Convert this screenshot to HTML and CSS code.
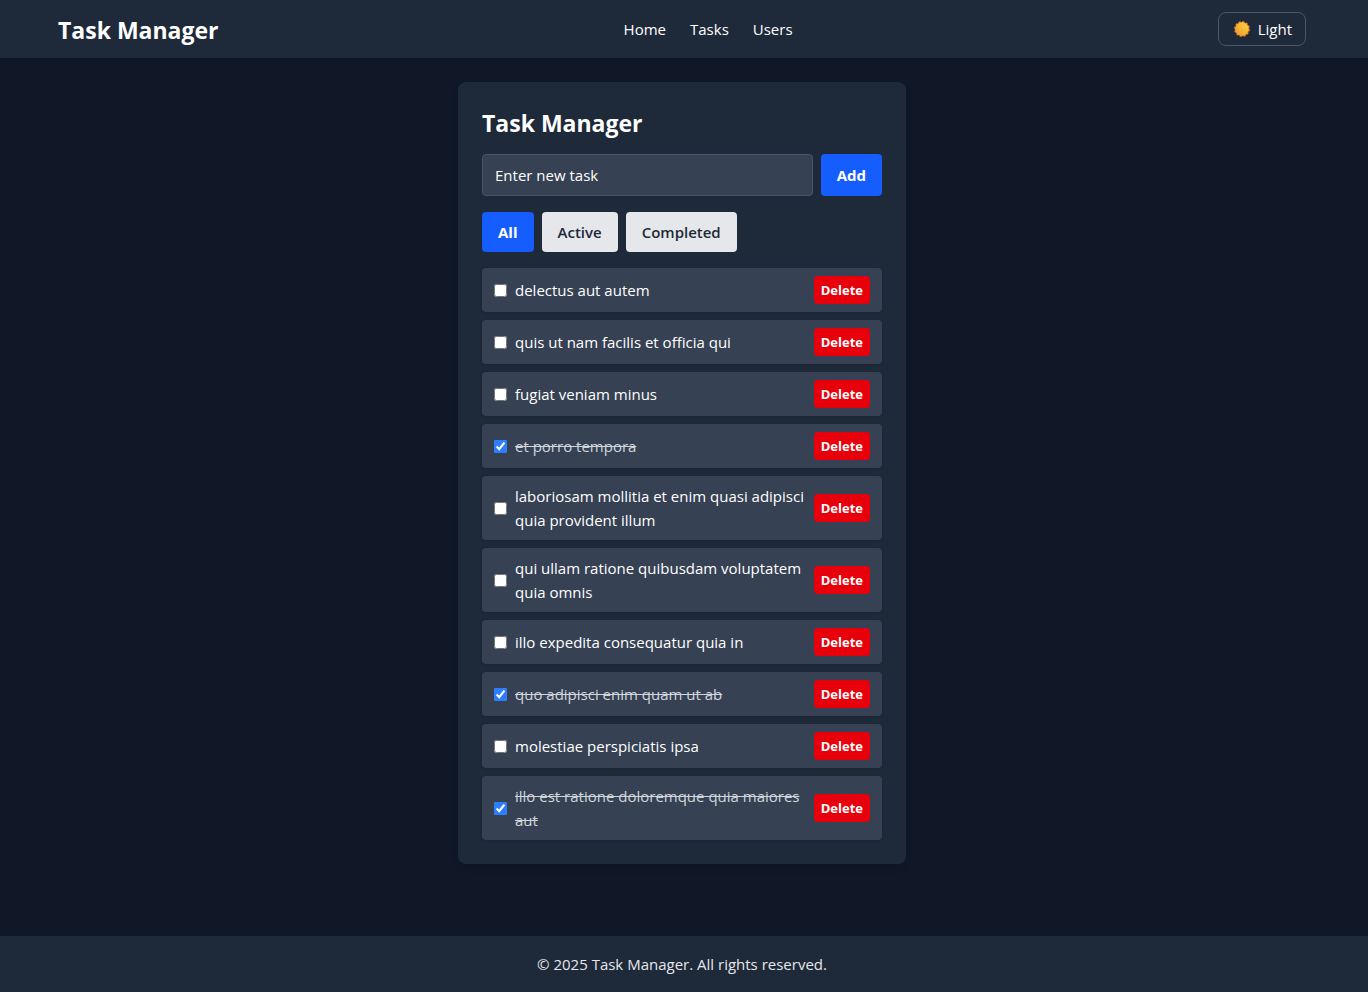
FILE: index.html
```html
<!DOCTYPE html>
<html lang="en">
<head>
<meta charset="utf-8">
<meta name="viewport" content="width=device-width, initial-scale=1">
<title>Task Manager</title>
<link rel="stylesheet" href="styles.css">
</head>
<body>
<header class="site-header">
  <div class="header-inner">
    <h1 class="title">Task Manager</h1>
    <nav class="nav" aria-label="Main">
      <a href="#home">Home</a>
      <a href="#tasks">Tasks</a>
      <a href="#users">Users</a>
    </nav>
    <button class="theme-button" type="button">
      <svg class="sun" viewBox="0 0 16 16" aria-hidden="true">
        <defs>
          <linearGradient id="sun-fill" x1="1" y1="0" x2="0" y2="1">
            <stop offset="0" stop-color="#fcd53f"/>
            <stop offset="1" stop-color="#ee9a2c"/>
          </linearGradient>
        </defs>
        <circle cx="8" cy="8" r="7.1" fill="none" stroke="#f08228" stroke-width="1.6" stroke-dasharray="2.2 1.517"/>
        <circle cx="8" cy="8" r="7.1" fill="#ef8b2c"/>
        <circle cx="8" cy="8" r="6.4" fill="url(#sun-fill)"/>
      </svg>
      <span>Light</span>
    </button>
  </div>
</header>
<main class="main">
  <section class="card">
    <h2 class="title">Task Manager</h2>
    <form class="task-form">
      <input class="task-input" type="text" placeholder="Enter new task" aria-label="Enter new task">
      <button class="button primary" type="button">Add</button>
    </form>
    <div class="filters">
      <button class="button primary" type="button">All</button>
      <button class="button secondary" type="button">Active</button>
      <button class="button secondary" type="button">Completed</button>
    </div>
    <ul class="tasks">
      <li class="task"><label class="task-label"><input class="check" type="checkbox"><span class="task-text">delectus aut autem</span></label><button class="delete" type="button">Delete</button></li>
      <li class="task"><label class="task-label"><input class="check" type="checkbox"><span class="task-text">quis ut nam facilis et officia qui</span></label><button class="delete" type="button">Delete</button></li>
      <li class="task"><label class="task-label"><input class="check" type="checkbox"><span class="task-text">fugiat veniam minus</span></label><button class="delete" type="button">Delete</button></li>
      <li class="task"><label class="task-label"><input class="check" type="checkbox" checked><span class="task-text">et porro tempora</span></label><button class="delete" type="button">Delete</button></li>
      <li class="task"><label class="task-label"><input class="check" type="checkbox"><span class="task-text">laboriosam mollitia et enim quasi adipisci quia provident illum</span></label><button class="delete" type="button">Delete</button></li>
      <li class="task"><label class="task-label"><input class="check" type="checkbox"><span class="task-text">qui ullam ratione quibusdam voluptatem quia omnis</span></label><button class="delete" type="button">Delete</button></li>
      <li class="task"><label class="task-label"><input class="check" type="checkbox"><span class="task-text">illo expedita consequatur quia in</span></label><button class="delete" type="button">Delete</button></li>
      <li class="task"><label class="task-label"><input class="check" type="checkbox" checked><span class="task-text">quo adipisci enim quam ut ab</span></label><button class="delete" type="button">Delete</button></li>
      <li class="task"><label class="task-label"><input class="check" type="checkbox"><span class="task-text">molestiae perspiciatis ipsa</span></label><button class="delete" type="button">Delete</button></li>
      <li class="task"><label class="task-label"><input class="check" type="checkbox" checked><span class="task-text">illo est ratione doloremque quia maiores aut</span></label><button class="delete" type="button">Delete</button></li>
    </ul>
  </section>
</main>
<footer class="site-footer">© 2025 Task Manager. All rights reserved.</footer>
</body>
</html>
```
FILE: styles.css
```css
*, *::before, *::after {
  box-sizing: border-box;
}

body {
  margin: 0;
  min-height: 100vh;
  display: flex;
  flex-direction: column;
  background: #101828;
  color: #fff;
  font-family: "Segoe UI", "Open Sans", "Noto Sans", sans-serif;
  font-size: 15px;
  line-height: 24px;
}

button, input {
  font: inherit;
}

button {
  cursor: pointer;
}

.title {
  margin: 0;
  padding-top: 2px;
  font-size: 23px;
  line-height: 30px;
  font-weight: 700;
}

.site-header {
  background: #1e2939;
  padding: 12px 4px 12px 0;
  box-shadow: 0 1px 3px rgb(0 0 0 / 0.1);
}

.header-inner {
  max-width: 1280px;
  margin: 0 auto;
  padding: 0 16px;
  display: flex;
  align-items: center;
  justify-content: space-between;
}

.nav {
  display: flex;
  gap: 24px;
  margin-right: 20px;
}

.nav a {
  color: inherit;
  text-decoration: none;
}

.theme-button {
  display: flex;
  align-items: center;
  gap: 8px;
  padding: 4px 13px;
  border: 1px solid #4a5565;
  border-radius: 8px;
  background: transparent;
  color: inherit;
}

.sun {
  width: 16px;
  height: 16px;
  margin-left: 2px;
}

.main {
  flex: 1;
  padding: 24px 4px 24px 0;
}

.card {
  max-width: 448px;
  margin: 0 auto;
  padding: 24px;
  border-radius: 8px;
  background: #1e2939;
  box-shadow: 0 4px 6px rgb(0 0 0 / 0.1);
}

.task-form {
  display: flex;
  gap: 8px;
  margin: 16px 0;
}

.task-input {
  flex: 1;
  min-width: 0;
  padding: 8px 12px;
  border: 1px solid #4a5565;
  border-radius: 4px;
  background: #364153;
  color: #fff;
}

.task-input::placeholder {
  color: #fff;
  opacity: 1;
}

.button {
  padding: 8px 16px;
  border: 0;
  border-radius: 4px;
  font-weight: 600;
}

.primary {
  background: #155dfc;
  color: #fff;
  font-weight: 700;
}

.secondary {
  background: #e5e7eb;
  color: #1e2939;
}

.filters {
  display: flex;
  gap: 8px;
  margin-bottom: 16px;
}

.tasks {
  margin: 0;
  padding: 0;
  list-style: none;
  display: grid;
  gap: 8px;
}

.task {
  display: flex;
  align-items: center;
  gap: 8px;
  padding: 8px 12px;
  border-radius: 4px;
  background: #364153;
  box-shadow: 0 1px 3px rgb(0 0 0 / 0.1);
}

.task-label {
  flex: 1;
  min-width: 0;
  display: flex;
  align-items: center;
  gap: 8px;
}

.check {
  flex: none;
  width: 13px;
  height: 13px;
  margin: 0;
  accent-color: #2b7fff;
}

.check:checked + .task-text {
  color: #d1d5dc;
  text-decoration: line-through;
}

.delete {
  padding: 4px 7px;
  border: 0;
  border-radius: 4px;
  background: #e7000b;
  color: #fff;
  font-size: 13px;
  line-height: 20px;
  font-weight: 700;
}

.site-footer {
  padding: 16px 4px 16px 0;
  background: #1e2939;
  color: #e5e7eb;
  text-align: center;
}
```
